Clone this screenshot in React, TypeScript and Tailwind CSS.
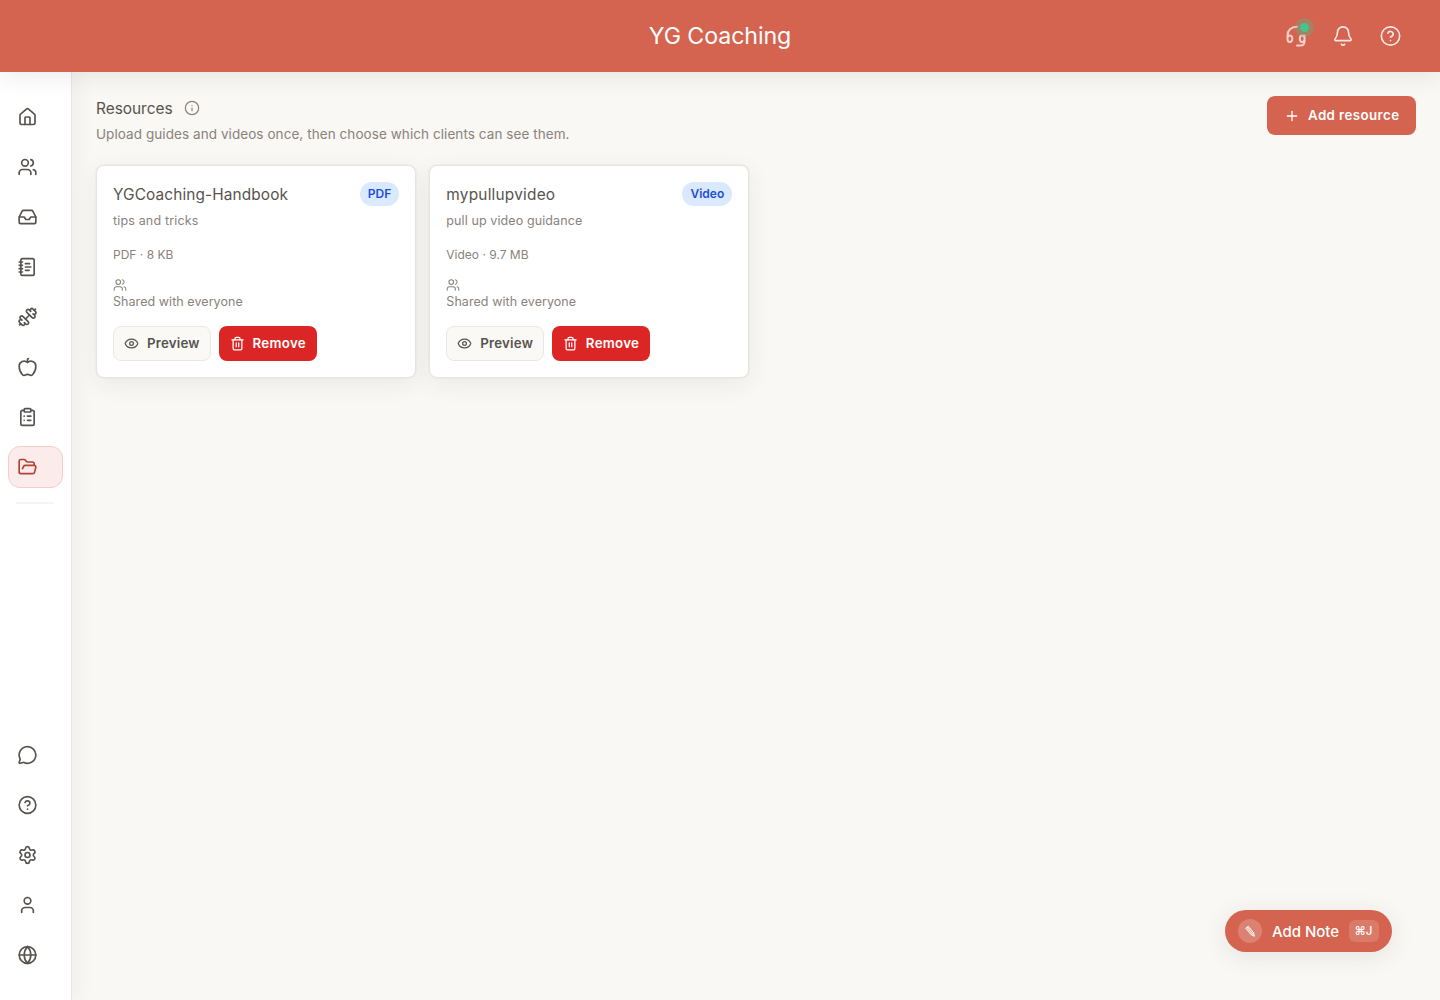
import {
  Apple,
  Bell,
  CircleHelp,
  ClipboardList,
  Dumbbell,
  Eye,
  FolderOpen,
  Globe,
  House,
  Inbox,
  Info,
  MessageCircle,
  NotebookText,
  Plus,
  Settings,
  Trash2,
  User,
  Users,
} from 'lucide-react';

const mainLinks = [
  { name: 'Home', icon: House },
  { name: 'Clients', icon: Users },
  { name: 'Inbox', icon: Inbox },
  { name: 'Programs', icon: NotebookText },
  { name: 'Exercises', icon: Dumbbell },
  { name: 'Nutrition', icon: Apple },
  { name: 'Check-ins', icon: ClipboardList },
  { name: 'Resources', icon: FolderOpen },
];

const bottomLinks = [
  { name: 'Messages', icon: MessageCircle },
  { name: 'Help', icon: CircleHelp },
  { name: 'Settings', icon: Settings },
  { name: 'Profile', icon: User },
  { name: 'Language', icon: Globe },
];

const resources = [
  {
    title: 'YGCoaching-Handbook',
    titleClass: 'tracking-[0.12px]',
    type: 'PDF',
    badgeClass: 'w-[39px]',
    description: 'tips and tricks',
    descriptionClass: 'tracking-[0.16px]',
    size: '8 KB',
  },
  {
    title: 'mypullupvideo',
    titleClass: 'tracking-[0.22px]',
    type: 'Video',
    badgeClass: 'w-[50px]',
    description: 'pull up video guidance',
    descriptionClass: 'tracking-[0.1px]',
    size: '9.7 MB',
  },
];

function Header() {
  return (
    <header className="relative z-20 grid h-[72px] shrink-0 grid-cols-[1fr_auto_1fr] items-center bg-[#d4634f] shadow-[0_4px_24px_rgba(41,37,36,0.09)]">
      <div />
      <h1 className="text-[23.2px] leading-8 font-normal tracking-[-0.1px] text-white">YG Coaching</h1>
      <div className="flex items-center justify-end gap-[25.5px] pr-[38.5px] text-white/85">
        <div className="relative">
          <svg
            width="22"
            height="22"
            viewBox="0 0 22 22"
            fill="none"
            stroke="currentColor"
            strokeWidth="2"
            strokeLinecap="round"
            className="block text-white/70"
          >
            <path d="M12 1.8C6 1.8 2.5 5.5 2.5 10.5v3.5a2.4 2.9 0 0 0 4.8 0v-.6a2.4 2.9 0 0 0-4.8 0" />
            <path d="M19.6 10.5v5.5c0 2.8-1.6 4.6-4 4.6h-3.6M19.6 13.4a2.4 2.9 0 0 0-4.8 0v.6a2.4 2.9 0 0 0 4.8 0" />
          </svg>
          <span className="absolute -top-[7px] left-[10px] flex size-[19px] items-center justify-center rounded-full bg-[#45c48e]/30">
            <span className="size-[9px] rounded-full bg-[#45c48e]" />
          </span>
        </div>
        <Bell size={22} strokeWidth={1.8} />
        <CircleHelp size={22} strokeWidth={1.8} className="-translate-x-[0.5px]" />
      </div>
    </header>
  );
}

function Sidebar() {
  return (
    <aside className="relative z-10 flex w-[72px] shrink-0 flex-col justify-between border-r border-[#e7e5e4] bg-white px-2 py-6 shadow-[4px_0_20px_rgba(41,37,36,0.05)]">
      <nav className="flex flex-col gap-2">
        {mainLinks.map(({ name, icon: Icon }) => (
          <a
            key={name}
            aria-label={name}
            className={
              name === 'Resources'
                ? 'flex h-[42px] items-center rounded-xl border border-[#f3cdc7] bg-[#fbeceb] px-[9px] text-[#b5402f]'
                : 'flex h-[42px] items-center rounded-xl border border-transparent px-[9px] text-[#57534e]'
            }
          >
            <Icon size={20} strokeWidth={2} className="-translate-x-[0.5px]" />
          </a>
        ))}
        <div className="mt-[6px] mr-[9px] ml-2 h-[2px] bg-[#f5f5f4]" />
      </nav>
      <nav className="flex flex-col gap-2">
        {bottomLinks.map(({ name, icon: Icon }) => (
          <a
            key={name}
            aria-label={name}
            className="flex h-[42px] items-center rounded-xl border border-transparent px-[9px] text-[#57534e]"
          >
            <Icon size={20} strokeWidth={2} className="-translate-x-[0.5px]" />
          </a>
        ))}
      </nav>
    </aside>
  );
}

function ResourceCard({ resource }: { resource: (typeof resources)[number] }) {
  return (
    <article className="h-[213px] rounded-lg border border-[#e7e5e0] bg-white p-4 shadow-[0_0_0_1px_rgba(231,229,224,0.5),0_6px_24px_rgba(41,37,36,0.07)]">
      <div className="flex h-6 items-start justify-between">
        <h3 className={`pt-[1px] text-[15.4px] leading-6 font-normal text-[#57534e] ${resource.titleClass}`}>
          {resource.title}
        </h3>
        <span
          className={`flex h-6 items-center justify-center rounded-full bg-[#dbe9fe] text-xs font-semibold text-[#1d4ed8] ${resource.badgeClass}`}
        >
          {resource.type}
        </span>
      </div>
      <p className={`mt-[5px] text-[12.5px] leading-5 font-normal text-[#8a827c] ${resource.descriptionClass}`}>
        {resource.description}
      </p>
      <p className="mt-[14px] text-[12px] leading-5 font-normal text-[#8a827c]">
        {resource.type} · {resource.size}
      </p>
      <div className="mt-[13px] text-[#8a827c]">
        <Users size={14} strokeWidth={1.8} />
        <p className="text-[12.5px] leading-[19px] font-normal tracking-[0.06px]">Shared with everyone</p>
      </div>
      <div className="mt-[15px] flex gap-2">
        <button className="flex h-[35px] w-[97.5px] items-center gap-2 rounded-lg border border-[#ebe8e3] bg-[#faf9f6] pl-[10px] text-[13.3px] font-semibold tracking-[0.2px] text-[#57534e]">
          <Eye size={15} strokeWidth={2} />
          Preview
        </button>
        <button className="flex h-[35px] w-[98.5px] items-center gap-2 rounded-lg bg-[#dc2626] pl-[11px] text-[13.3px] font-semibold tracking-[0.3px] text-white">
          <Trash2 size={15} strokeWidth={2} />
          Remove
        </button>
      </div>
    </article>
  );
}

export default function App() {
  return (
    <div className="flex h-screen flex-col overflow-hidden bg-[#f9f8f4] font-['Inter',sans-serif]">
      <Header />
      <div className="flex flex-1">
        <Sidebar />
        <main className="flex-1 p-6">
          <div className="flex items-start justify-between">
            <div>
              <div className="flex h-6 items-center gap-[11px]">
                <h2 className="pt-px text-[15.4px] font-normal text-[#57534e]">Resources</h2>
                <Info size={16} strokeWidth={1.8} className="text-[#8a827c]" />
              </div>
              <p className="mt-1 text-[13.5px] leading-5 font-normal tracking-[0.07px] text-[#8a827c]">
                Upload guides and videos once, then choose which clients can see them.
              </p>
            </div>
            <button className="flex h-[39px] w-[149px] items-center gap-2 rounded-lg bg-[#d4634f] pl-[17px] text-[13.3px] font-semibold tracking-[0.42px] whitespace-nowrap text-white">
              <Plus size={16} strokeWidth={1.9} />
              Add resource
            </button>
          </div>
          <div className="mt-[21px] grid grid-cols-4 gap-[13.33px]">
            {resources.map((resource) => (
              <ResourceCard key={resource.title} resource={resource} />
            ))}
          </div>
        </main>
      </div>

      <button className="absolute right-12 bottom-12 flex h-[42px] w-[167px] items-center rounded-full bg-[#d4634f] pl-[13px] text-white shadow-[0_4px_24px_rgba(41,37,36,0.1)]">
        <span className="flex size-6 items-center justify-center rounded-full bg-white/20">
          <svg width="12" height="12" viewBox="0 0 12 12" fill="none" stroke="currentColor" strokeWidth="0.9" strokeLinejoin="round">
            <path d="M1.7 3.2 4.2 1.2 9.6 7.7 10.4 11.3 7.2 9.8Z" fill="currentColor" fillOpacity="0.35" />
            <path d="M3 2.2 8.4 8.8M7.2 9.8 9.6 7.7" strokeWidth="0.7" />
          </svg>
        </span>
        <span className="ml-[9.5px] w-[68px] pt-[2px] text-[15px] font-medium whitespace-nowrap">Add Note</span>
        <kbd className="ml-[9px] flex h-[22px] w-[30px] items-center justify-center rounded-md bg-white/15 pt-px font-['Inter',sans-serif] text-[11.5px] font-medium">
          ⌘J
        </kbd>
      </button>
    </div>
  );
}
